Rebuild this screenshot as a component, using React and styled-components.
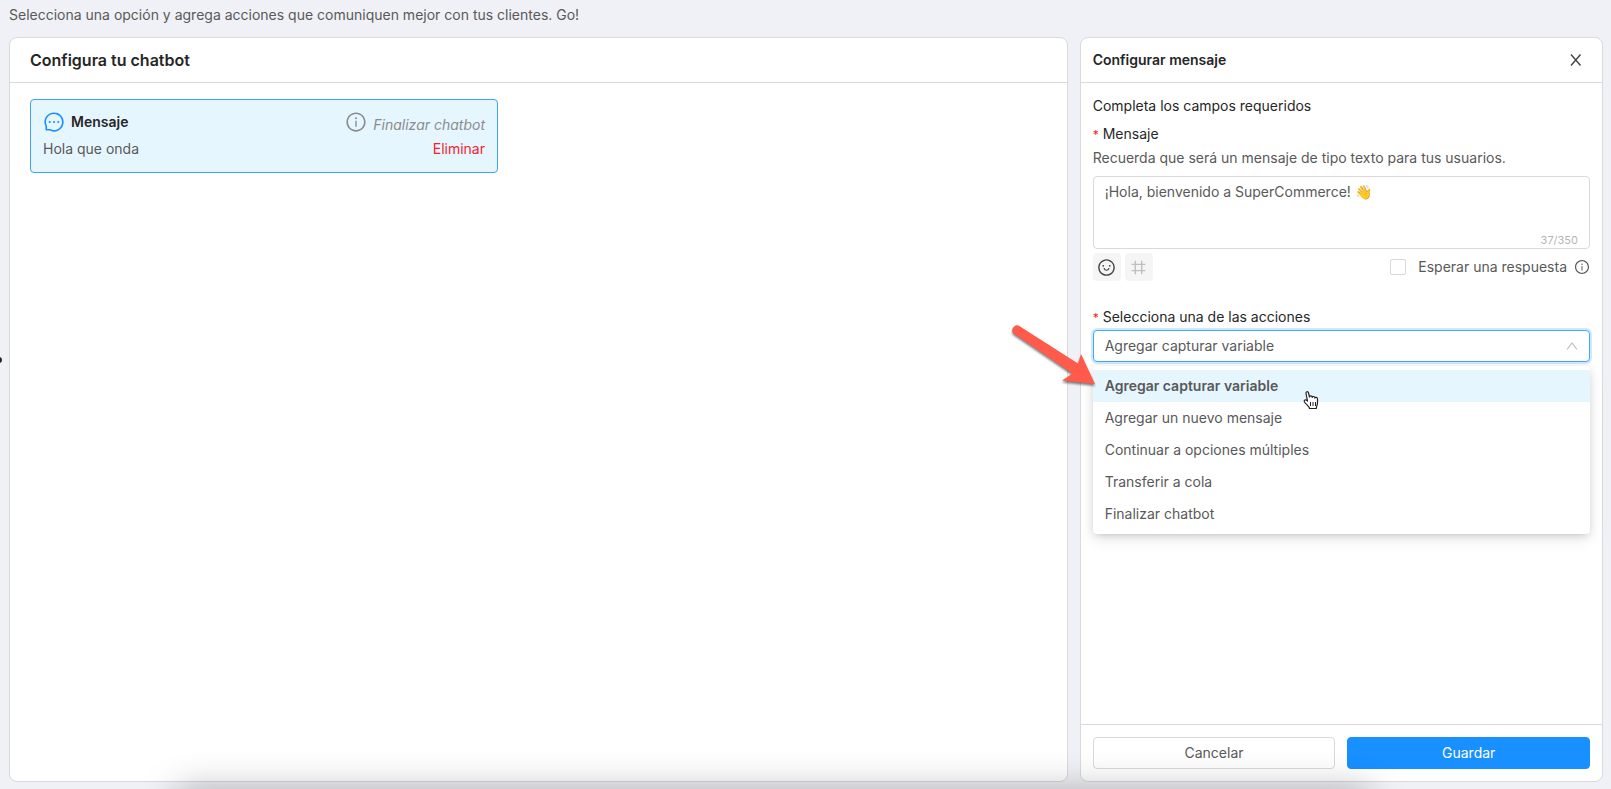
import React, { useState } from 'react';
import styled, { createGlobalStyle, css } from 'styled-components';
import {
    AiOutlineInfoCircle,
    AiOutlineMessage,
    AiOutlineSmile
} from 'react-icons/ai';

const GlobalStyle = createGlobalStyle`
    *, *::before, *::after {
        box-sizing: border-box;
    }
    body {
        margin: 0;
        background: #f0f1f6;
        color: #595959;
        font-family: Inter, "Liberation Sans", sans-serif;
        font-size: 14px;
        line-height: 22px;
    }
    button, input, textarea {
        font: inherit;
        color: inherit;
    }
    h1, h2, h3, p, ul {
        margin: 0;
        padding: 0;
    }
`;

const Page = styled.div`
    position: relative;
    display: flex;
    flex-direction: column;
    min-height: 100vh;
    padding: 4px 8px 7px 9px;
    overflow: hidden;
`;

const Columns = styled.div`
    display: flex;
    flex: 1;
    gap: 12px;
    margin-top: 11px;
`;

const Panel = styled.section`
    display: flex;
    flex-direction: column;
    background: #fff;
    border: 1px solid #d9d9de;
    border-radius: 8px;
    ${({ $side }) => $side
        ? css`flex: 0 0 calc(100% / 3 - 8px);`
        : css`flex: 1;`}
`;

const PanelHeader = styled.header`
    display: flex;
    align-items: center;
    justify-content: space-between;
    height: 45px;
    padding: 0 ${({ $side }) => $side ? '12px' : '20px'};
    border-bottom: 1px solid #d9d9de;
`;

const Title = styled.h2`
    color: #262626;
    font-size: ${({ $small }) => $small ? '14px' : '16px'};
    font-weight: 600;
`;

const IconButton = styled.button`
    display: flex;
    align-items: center;
    justify-content: center;
    width: 28px;
    height: 28px;
    padding: 0;
    border: 0;
    border-radius: 4px;
    background: ${({ $filled }) => $filled ? '#f5f5f5' : 'none'};
    color: ${({ disabled }) => disabled ? '#bfbfbf' : '#434343'};
    svg {
        width: ${({ $filled }) => $filled ? '19px' : '14px'};
        height: ${({ $filled }) => $filled ? '19px' : '14px'};
    }
`;

const Canvas = styled.div`
    flex: 1;
    padding: 16px 20px;
`;

const Card = styled.article`
    display: grid;
    gap: 3px;
    width: 468px;
    max-width: 100%;
    padding: 10px 12px 11px;
    background: #e6f6ff;
    border: 1px solid #40a0ff;
    border-radius: 4px;
`;

const CardRow = styled.div`
    display: flex;
    align-items: center;
    justify-content: space-between;
    height: 24px;
`;

const CardLabel = styled.div`
    display: flex;
    align-items: center;
    gap: 6px;
    svg {
        width: 22px;
        height: 22px;
        color: ${({ $muted }) => $muted ? '#8c8c8c' : '#1890ff'};
    }
    h3 {
        color: #262626;
        font-size: 14px;
        font-weight: 600;
    }
    em {
        padding-top: 6px;
        color: #8c8c8c;
    }
`;

const DeleteButton = styled.button`
    padding: 0;
    border: 0;
    background: none;
    color: #f5222d;
`;

const Form = styled.form`
    display: flex;
    flex: 1;
    flex-direction: column;
`;

const Fields = styled.div`
    flex: 1;
    padding: 12px;
`;

const Intro = styled.p`
    margin-bottom: 6px;
    color: #262626;
`;

const FieldLabel = styled.label`
    display: block;
    margin-bottom: 1px;
    color: #262626;
    &::before {
        content: '*';
        margin-right: 4px;
        color: #f5222d;
        font-size: 12px;
    }
`;

const MessageBox = styled.div`
    display: flex;
    flex-direction: column;
    height: 73px;
    margin-top: 7px;
    padding: 4px 11px 0;
    border: 1px solid #d9d9d9;
    border-radius: 4px;
    textarea {
        flex: 1;
        width: 100%;
        min-height: 0;
        padding: 0;
        border: 0;
        outline: 0;
        resize: none;
        overflow: hidden;
        background: none;
    }
    small {
        align-self: flex-end;
        color: #b5b5ba;
        font-size: 11px;
        line-height: 16px;
    }
`;

const Tools = styled.div`
    display: flex;
    align-items: center;
    gap: 4px;
    margin: 4px 0 25px;
`;

const WaitLabel = styled.label`
    display: flex;
    align-items: center;
    gap: 12px;
    margin-left: auto;
    margin-right: 3px;
    input {
        appearance: none;
        width: 16px;
        height: 16px;
        margin: 0;
        border: 1px solid #d9d9d9;
        border-radius: 2px;
        background: #fff;
    }
    input:checked {
        background: #1890ff;
    }
`;

const SelectWrap = styled.div`
    position: relative;
    margin-top: 1px;
`;

const SelectButton = styled.button`
    display: flex;
    align-items: center;
    justify-content: space-between;
    width: 100%;
    height: 32px;
    padding: 0 11px;
    background: #fff;
    border: 1px solid #40a9ff;
    border-radius: 4px;
    box-shadow: 0 0 0 2px rgba(24, 144, 255, .2);
    svg {
        width: 12px;
        height: 12px;
        color: #bfbfbf;
    }
`;

const Options = styled.ul`
    position: absolute;
    top: calc(100% + 4px);
    left: 0;
    right: 0;
    padding: 4px 0;
    list-style: none;
    background: #fff;
    border-radius: 4px;
    box-shadow: 0 3px 6px -4px rgba(0, 0, 0, .12), 0 6px 16px rgba(0, 0, 0, .08), 0 2px 8px rgba(0, 0, 0, .1);
`;

const Option = styled.li`
    padding: 5px 12px;
    cursor: pointer;
    ${({ $selected }) => $selected && css`
        background: #e6f6ff;
        font-weight: 600;
    `}
`;

const Footer = styled.footer`
    display: flex;
    gap: 12px;
    padding: 12px;
    border-top: 1px solid #d9d9de;
`;

const Button = styled.button`
    flex: 1;
    height: 32px;
    border: 1px solid ${({ $primary }) => $primary ? '#1890ff' : '#d9d9d9'};
    border-radius: 4px;
    background: ${({ $primary }) => $primary ? '#1890ff' : '#fff'};
    color: ${({ $primary }) => $primary ? '#fff' : '#595959'};
`;

const Arrow = styled.svg`
    position: absolute;
    top: -42px;
    left: -84px;
    width: 92px;
    height: 68px;
    z-index: 2;
    pointer-events: none;
    filter: drop-shadow(0 2px 1px rgba(0, 0, 0, .5));
`;

const Hand = styled.svg`
    position: absolute;
    top: 24px;
    left: 210px;
    width: 16px;
    height: 20px;
    z-index: 2;
    pointer-events: none;
`;

const Handle = styled.span`
    position: absolute;
    top: 357px;
    left: -4px;
    width: 6px;
    height: 6px;
    border-radius: 50%;
    background: #262626;
`;

const BottomShade = styled.div`
    position: absolute;
    bottom: -40px;
    left: 11%;
    right: 15%;
    height: 40px;
    box-shadow: 0 0 36px rgba(0, 0, 0, .28);
    pointer-events: none;
`;

const actions = [
    'Agregar capturar variable',
    'Agregar un nuevo mensaje',
    'Continuar a opciones múltiples',
    'Transferir a cola',
    'Finalizar chatbot'
];

function HashIcon() {
    return (
        <svg viewBox="0 0 18 18" fill="none" stroke="currentColor" strokeWidth="1.3">
            <path d="M6 2.500v13M12 2.500v13M2.500 6h13M2.500 12h13" />
        </svg>
    )
}

function CloseIcon() {
    return (
        <svg viewBox="0 0 14 14" fill="none" stroke="currentColor" strokeWidth="1.4">
            <path d="M2 1.500L11.500 12.500M11.500 1.500L2 12.500" />
        </svg>
    )
}

function UpIcon() {
    return (
        <svg viewBox="0 0 12 12" fill="none" stroke="currentColor" strokeWidth="1.2">
            <path d="M1 9.500L6 3L11 9.500" />
        </svg>
    )
}

function MessageCard({ title, text, next }) {
    return (
        <Card>
            <CardRow>
                <CardLabel>
                    <AiOutlineMessage />
                    <h3>{title}</h3>
                </CardLabel>
                <CardLabel $muted>
                    <AiOutlineInfoCircle />
                    <em>{next}</em>
                </CardLabel>
            </CardRow>
            <CardRow>
                <p>{text}</p>
                <DeleteButton type="button">Eliminar</DeleteButton>
            </CardRow>
        </Card>
    )
}

function ActionSelect({ id, value, onChange }) {
    const [open, setOpen] = useState(true);

    return (
        <SelectWrap>
            <SelectButton
                id={id}
                type="button"
                role="combobox"
                aria-expanded={open}
                aria-controls="action-options"
                onClick={() => setOpen(!open)}
            >
                {value}
                <UpIcon />
            </SelectButton>
            {open && (
                <>
                    <Options id="action-options" role="listbox">
                        {actions.map(action => (
                            <Option
                                key={action}
                                role="option"
                                aria-selected={action === value}
                                $selected={action === value}
                                onClick={() => onChange(action)}
                            >
                                {action}
                            </Option>
                        ))}
                        <Arrow viewBox="0 0 92 68">
                            <path fill="#ff5a4a" d="M9.5 1.5 L69 39.5 L72 30 L86 60 L53 56.5 L63.5 49.5 L4 9 A5 5 0 0 1 9.5 1.5Z" />
                        </Arrow>
                        <Hand viewBox="0 0 16 20">
                            <path
                                fill="#fff"
                                stroke="#222"
                                strokeWidth="1.2"
                                strokeLinejoin="round"
                                d="M4.500 11L3 3.500c-.4-2 2-2.500 2.500-.5L6.500 7c0-1.500 2.500-1.500 2.700 0v.5c0-1.500 2.500-1.300 2.700.2v.5c.3-1.300 2.600-1 2.600.8V13c0 2-1.200 3-1.200 5.500H6.500c0-2-3.500-4-5-6.500C.5 10 2.500 9 4.500 11Z"
                            />
                            <path stroke="#222" d="M7.500 12v4M10 12v4M12.500 12v4" />
                        </Hand>
                    </Options>
                </>
            )}
        </SelectWrap>
    )
}

export default function App() {
    const [message, setMessage] = useState('¡Hola, bienvenido a SuperCommerce! 👋');
    const [action, setAction] = useState(actions[0]);

    return (
        <Page>
            <GlobalStyle />
            <p>Selecciona una opción y agrega acciones que comuniquen mejor con tus clientes. Go!</p>
            <Columns>
                <Panel>
                    <PanelHeader>
                        <Title>Configura tu chatbot</Title>
                    </PanelHeader>
                    <Canvas>
                        <MessageCard title="Mensaje" text="Hola que onda" next="Finalizar chatbot" />
                    </Canvas>
                </Panel>
                <Panel $side>
                    <PanelHeader $side>
                        <Title $small>Configurar mensaje</Title>
                        <IconButton type="button" aria-label="Cerrar">
                            <CloseIcon />
                        </IconButton>
                    </PanelHeader>
                    <Form onSubmit={e => e.preventDefault()}>
                        <Fields>
                            <Intro>Completa los campos requeridos</Intro>
                            <FieldLabel htmlFor="message">Mensaje</FieldLabel>
                            <p>Recuerda que será un mensaje de tipo texto para tus usuarios.</p>
                            <MessageBox>
                                <textarea
                                    id="message"
                                    value={message}
                                    onChange={e => setMessage(e.target.value)}
                                />
                                <small>37/350</small>
                            </MessageBox>
                            <Tools>
                                <IconButton type="button" $filled aria-label="Emoji">
                                    <AiOutlineSmile />
                                </IconButton>
                                <IconButton type="button" $filled disabled aria-label="Variable">
                                    <HashIcon />
                                </IconButton>
                                <WaitLabel>
                                    <input type="checkbox" />
                                    Esperar una respuesta
                                </WaitLabel>
                                <AiOutlineInfoCircle size={16} />
                            </Tools>
                            <FieldLabel htmlFor="action">Selecciona una de las acciones</FieldLabel>
                            <ActionSelect id="action" value={action} onChange={setAction} />
                        </Fields>
                        <Footer>
                            <Button type="button">Cancelar</Button>
                            <Button type="submit" $primary>Guardar</Button>
                        </Footer>
                    </Form>
                </Panel>
            </Columns>
            <Handle />
            <BottomShade />
        </Page>
    )
}
